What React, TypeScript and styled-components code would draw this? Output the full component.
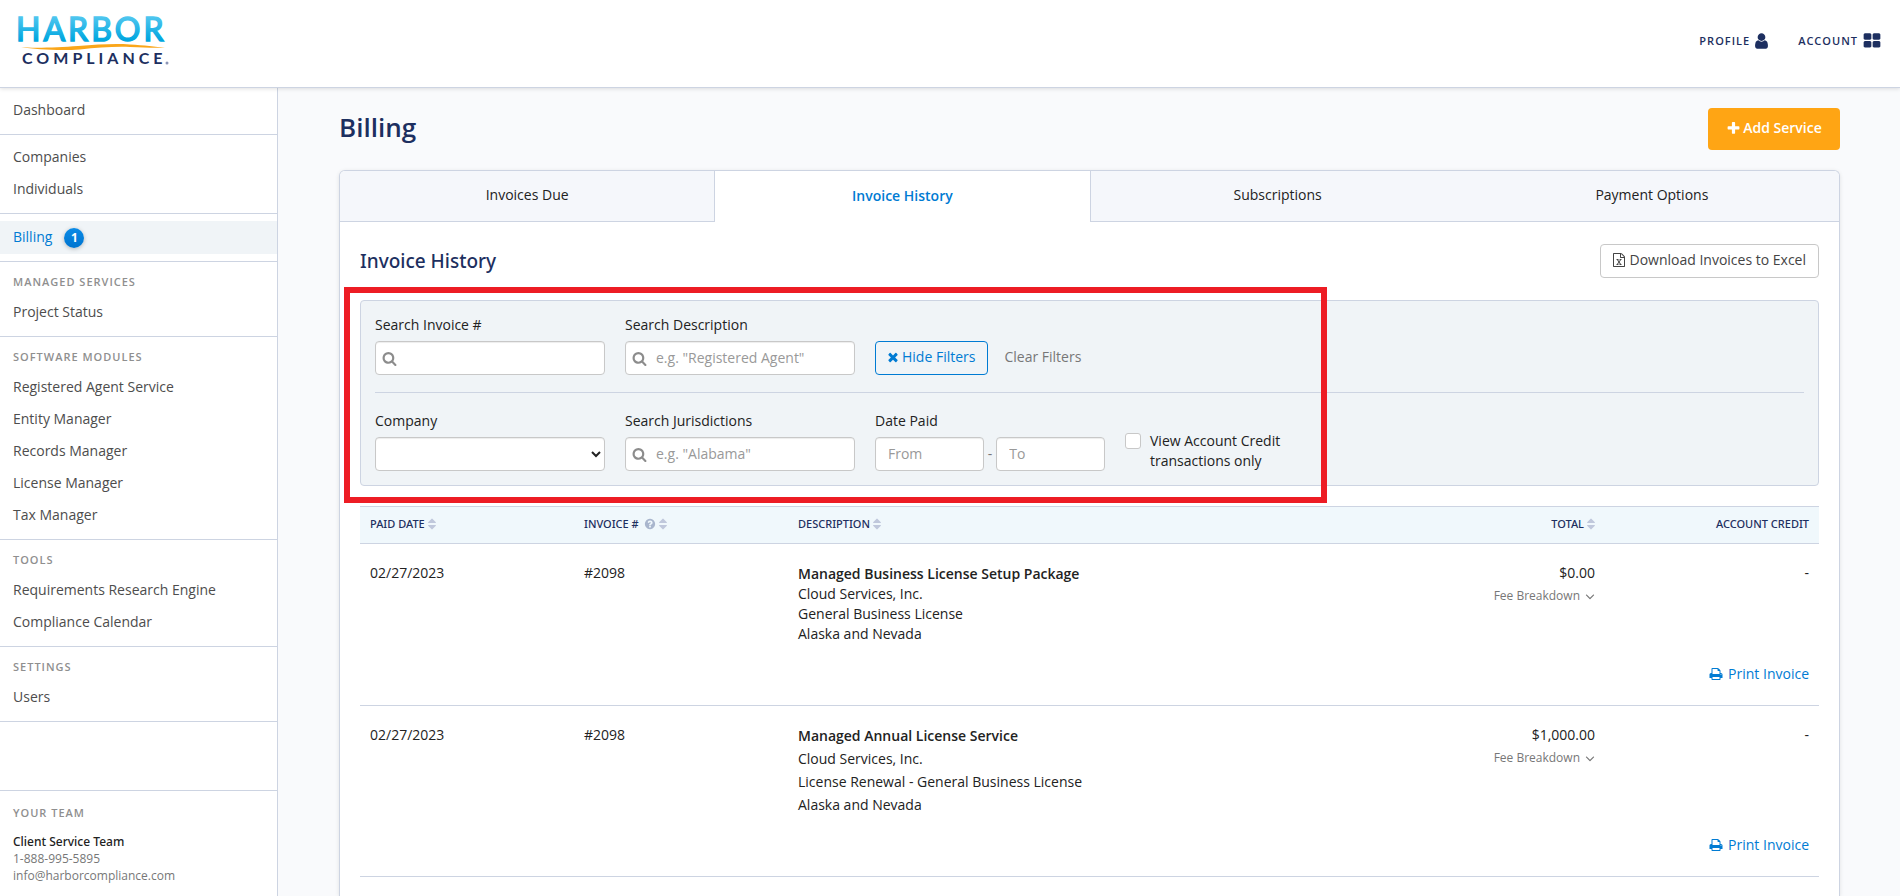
import React from "react";
import styled, { createGlobalStyle, css } from "styled-components";

const color = {
  navy: "#1d2f60",
  blue: "#007bd3",
  line: "#cdd4e2",
  text: "#222222",
  muted: "#777777",
  nav: "#4d4d4d",
  field: "#c8c8c8",
};

const mediumFont = `"Noto Sans", "Open Sans", sans-serif`;

const GlobalStyle = createGlobalStyle`
  *, *::before, *::after { box-sizing: border-box; }
  body {
    margin: 0;
    background: #f9fafc;
    color: ${color.text};
    font-family: "Open Sans", "Noto Sans", sans-serif;
    font-size: 14px;
    line-height: 20px;
  }
  a { text-decoration: none; }
  button, input, select { font: inherit; }
  button { cursor: pointer; }
`;

/* ---------- icons ---------- */

const icons = {
  search:
    "M1216 832q0-185-131.5-316.5t-316.5-131.5-316.5 131.5-131.5 316.5 131.5 316.5 316.5 131.5 316.5-131.5 131.5-316.5zm512 832q0 52-38 90t-90 38q-54 0-90-38l-343-342q-179 124-399 124-143 0-273.5-55.5t-225-150-150-225-55.5-273.5 55.5-273.5 150-225 225-150 273.5-55.5 273.5 55.5 225 150 150 225 55.5 273.5q0 220-124 399l343 343q37 37 37 90z",
  user:
    "M1536 1399q0 109-62.5 187t-150.5 78h-854q-88 0-150.5-78t-62.5-187q0-85 8.5-160.5t31.5-152 58.5-131 94-89 134.5-34.5q131 128 313 128t313-128q76 0 134.5 34.5t94 89 58.5 131 31.5 152 8.5 160.5zm-256-887q0 159-112.5 271.5t-271.5 112.5-271.5-112.5-112.5-271.5 112.5-271.5 271.5-112.5 271.5 112.5 112.5 271.5z",
  grid:
    "M832 1024v384q0 52-38 90t-90 38h-512q-52 0-90-38t-38-90v-384q0-52 38-90t90-38h512q52 0 90 38t38 90zm0-768v384q0 52-38 90t-90 38h-512q-52 0-90-38t-38-90v-384q0-52 38-90t90-38h512q52 0 90 38t38 90zm896 768v384q0 52-38 90t-90 38h-512q-52 0-90-38t-38-90v-384q0-52 38-90t90-38h512q52 0 90 38t38 90zm0-768v384q0 52-38 90t-90 38h-512q-52 0-90-38t-38-90v-384q0-52 38-90t90-38h512q52 0 90 38t38 90z",
  plus:
    "M1600 736v192q0 40-28 68t-68 28h-416v416q0 40-28 68t-68 28h-192q-40 0-68-28t-28-68v-416h-416q-40 0-68-28t-28-68v-192q0-40 28-68t68-28h416v-416q0-40 28-68t68-28h192q40 0 68 28t28 68v416h416q40 0 68 28t28 68z",
  times:
    "M1490 1322q0 40-28 68l-136 136q-28 28-68 28t-68-28l-294-294-294 294q-28 28-68 28t-68-28l-136-136q-28-28-28-68t28-68l294-294-294-294q-28-28-28-68t28-68l136-136q28-28 68-28t68 28l294 294 294-294q28-28 68-28t68 28l136 136q28 28 28 68t-28 68l-294 294 294 294q28 28 28 68z",
  print:
    "M448 1536h896v-256h-896v256zm0-640h896v-384h-160q-40 0-68-28t-28-68v-160h-640v640zm1152 64q0-26-19-45t-45-19-45 19-19 45 19 45 45 19 45-19 19-45zm128 0v416q0 13-9.5 22.5t-22.5 9.5h-224v160q0 40-28 68t-68 28h-960q-40 0-68-28t-28-68v-160h-224q-13 0-22.5-9.5t-9.5-22.5v-416q0-79 56.5-135.5t135.5-56.5h64v-544q0-40 28-68t68-28h672q40 0 88 20t76 48l152 152q28 28 48 76t20 88v256h64q79 0 135.5 56.5t56.5 135.5z",
  help:
    "M1024 1376v-192q0-14-9-23t-23-9h-192q-14 0-23 9t-9 23v192q0 14 9 23t23 9h192q14 0 23-9t9-23zm256-672q0-88-55.5-163t-138.5-116-170-41q-243 0-371 213-15 24 8 42l132 100q7 6 19 6 16 0 25-12 53-68 86-92 34-24 86-24 48 0 85.5 26t37.5 59q0 38-20 61t-68 45q-63 28-115.5 86.5t-52.5 125.5v36q0 14 9 23t23 9h192q14 0 23-9t9-23q0-19 21.5-49.5t54.5-49.5q32-18 49-28.5t46-35 44.5-48 28-60.5 12.5-81zm384 192q0 209-103 385.5t-279.5 279.5-385.5 103-385.5-103-279.5-279.5-103-385.5 103-385.5 279.5-279.5 385.5-103 385.5 103 279.5 279.5 103 385.5z",
  sort:
    "M1408 1088q0 26-19 45l-448 448q-19 19-45 19t-45-19l-448-448q-19-19-19-45t19-45 45-19h896q26 0 45 19t19 45zm0-384q0 26-19 45t-45 19h-896q-26 0-45-19t-19-45 19-45l448-448q19-19 45-19t45 19l448 448q19 19 19 45z",
  down:
    "M1395 736q0 13-10 23l-466 466q-10 10-23 10t-23-10l-466-466q-10-10-10-23t10-23l50-50q10-10 23-10t23 10l393 393 393-393q10-10 23-10t23 10l50 50q10 10 10 23z",
  excel:
    "M1596 380q28 28 48 76t20 88v1152q0 40-28 68t-68 28h-1344q-40 0-68-28t-28-68v-1600q0-40 28-68t68-28h896q40 0 88 20t76 48zm-444-244v376h376q-10-29-22-41l-313-313q-12-12-41-22zm384 1528v-1024h-416q-40 0-68-28t-28-68v-416h-768v1536h1280zm-979-234v106h281v-106h-75l103-161q5-7 10-16.5t7.5-13.5 3.5-4h2q1 4 5 10 2 4 4.5 7.5t6 8 6.5 8.5l107 161h-76v106h291v-106h-68l-192-273 195-282h67v-107h-279v107h74l-103 159q-4 7-10 16.5t-9 13.5l-2 3h-2q-1-4-5-10-6-11-17-23l-106-159h76v-107h-290v107h68l189 272-194 283h-68z",
};

const Icon = ({ name, size = 14, box = "0 0 1792 1792" }: { name: keyof typeof icons; size?: number; box?: string }) => {
  const [, , w, h] = box.split(" ").map(Number);
  return (
    <svg width={Math.round((size * w) / h)} height={size} viewBox={box} fill="currentColor" aria-hidden="true">
      <path d={icons[name]} />
    </svg>
  );
};

const Logo = () => (
  <svg width="170" height="70" viewBox="-6 -8 170 70" role="img" aria-label="Harbor Compliance">
    <defs>
      <linearGradient id="sea" x1="0" y1="0" x2="0" y2="1">
        <stop offset="0.2" stopColor="#4fc6ef" />
        <stop offset="0.8" stopColor="#00a6df" />
      </linearGradient>
    </defs>
    <text
      x="-2"
      y="27"
      fill="url(#sea)"
      stroke="url(#sea)"
      strokeWidth="1.500"
      fontFamily="Lato, sans-serif"
      fontSize="32"
      letterSpacing="3"
    >
      HARBOR
    </text>
    <path d="M3 33 C14 34.500 40 33.500 60 32 C80 30.500 96 29.500 112 30.500 C126 31.200 138 33 147 33.500 C138 34.300 126 33.500 112 33 C96 32.500 80 33.500 62 35.500 C42 37 18 35.500 3 33Z" fill="#faa61a" />
    <text x="4" y="50" fill={color.navy} fontFamily="Lato, sans-serif" fontSize="16" fontWeight="700" letterSpacing="4">
      COMPLIANCE
    </text>
    <circle cx="149" cy="49" r="1.500" fill="#8b94b5" />
  </svg>
);

/* ---------- page frame ---------- */

const Page = styled.div`
  min-height: 100vh;
  display: flex;
  flex-direction: column;
`;

const Header = styled.header`
  position: relative;
  display: flex;
  justify-content: space-between;
  height: 88px;
  padding: 6px 19px 0 12px;
  background: #fff;
  border-bottom: 1px solid ${color.line};
  box-shadow: 0 1px 4px rgba(0, 0, 0, 0.12);
`;

const AccountNav = styled.nav`
  display: flex;
  gap: 30px;
  height: 70px;
  align-items: center;
`;

const AccountLink = styled.a`
  display: flex;
  align-items: center;
  gap: 5px;
  color: ${color.navy};
  font-size: 11px;
  font-weight: 600;
  letter-spacing: 1px;
`;

const Body = styled.div`
  flex: 1;
  display: flex;
`;

const Sidebar = styled.aside`
  flex: 0 0 278px;
  display: flex;
  flex-direction: column;
  background: #fff;
  border-right: 1px solid ${color.line};
`;

const NavGroup = styled.nav`
  padding: 7px 0;
  border-bottom: 1px solid ${color.line};
`;

const GroupTitle = styled.h2`
  margin: 0;
  padding: 0 13px 2px;
  color: #8f8f8f;
  font-size: 11px;
  font-weight: 600;
  line-height: 26px;
  letter-spacing: 1px;
`;

const NavLink = styled.a<{ $active?: boolean }>`
  display: flex;
  align-items: center;
  gap: 12px;
  min-height: ${(p) => (p.$active ? 33 : 32)}px;
  padding: 0 13px 2px;
  color: ${(p) => (p.$active ? color.blue : color.nav)};
  background: ${(p) => (p.$active ? "#f0f4f7" : "transparent")};
`;

const Count = styled.span`
  width: 20px;
  height: 20px;
  margin-top: 2px;
  border-radius: 50%;
  background: linear-gradient(#0a8ae6, #0074cf);
  box-shadow: 0 1px 4px rgba(0, 0, 0, 0.25);
  color: #fff;
  font-size: 12px;
  font-weight: 700;
  line-height: 20px;
  text-align: center;
`;

const Team = styled.section`
  margin-top: auto;
  padding: 9px 0 12px;
  border-top: 1px solid ${color.line};
`;

const TeamList = styled.address`
  display: flex;
  flex-direction: column;
  padding: 5px 13px 0;
  color: ${color.muted};
  font-size: 12px;
  font-style: normal;
  line-height: 17px;

  strong { color: ${color.text}; font-family: ${mediumFont}; font-weight: 500; }
  a { color: inherit; }
`;

const Main = styled.main`
  flex: 1;
  min-width: 0;
  display: flex;
  flex-direction: column;
  padding: 20px 60px 0 61px;
`;

const TitleBar = styled.div`
  display: flex;
  justify-content: space-between;
  align-items: flex-start;
  margin-bottom: 20px;
`;

const PageTitle = styled.h1`
  margin: 0;
  color: ${color.navy};
  font-size: 26px;
  font-weight: 600;
  line-height: 38px;
`;

const AddButton = styled.button`
  display: flex;
  align-items: center;
  justify-content: center;
  gap: 2px;
  width: 132px;
  height: 42px;
  padding: 0 0 2px;
  border: 0;
  border-radius: 4px;
  background: #ffa514;
  color: #fff;
  font-weight: 600;
`;

/* ---------- panel ---------- */

const Panel = styled.div`
  flex: 1;
  background: #fff;
  border: 1px solid ${color.line};
  border-bottom: 0;
  border-radius: 6px 6px 0 0;
  box-shadow: 0 1px 4px rgba(0, 0, 0, 0.1);
`;

const Tabs = styled.div`
  display: flex;
`;

const Tab = styled.button<{ $active?: boolean }>`
  flex: 1;
  height: 51px;
  padding: 0 0 2px;
  border: 0;
  border-bottom: 1px solid ${color.line};
  background: #f5f7fb;
  color: ${color.text};

  &:first-child { border-top-left-radius: 5px; }
  &:last-child { border-top-right-radius: 5px; }

  ${(p) =>
    p.$active &&
    css`
      border: 1px solid ${color.line};
      border-width: 0 1px;
      background: #fff;
      color: ${color.blue};
      font-weight: 600;
    `}
`;

const PanelBody = styled.div`
  padding: 22px 20px 0;
`;

const SectionBar = styled.div`
  display: flex;
  justify-content: space-between;
  align-items: center;
  margin-bottom: 22px;
`;

const SectionTitle = styled.h2`
  margin: 0;
  color: ${color.navy};
  font-family: ${mediumFont};
  font-size: 19px;
  font-weight: 500;
  line-height: 34px;
`;

const Button = styled.button<{ $primary?: boolean }>`
  display: flex;
  align-items: center;
  gap: 4px;
  height: 34px;
  padding: 0 12px 2px;
  border: 1px solid ${(p) => (p.$primary ? color.blue : color.field)};
  border-radius: 4px;
  background: ${(p) => (p.$primary ? "transparent" : "#fff")};
  color: ${(p) => (p.$primary ? color.blue : "#444")};
`;

/* ---------- filters ---------- */

const Filters = styled.form`
  position: relative;
  padding: 14px;
  margin-bottom: 20px;
  background: #f0f4f7;
  border: 1px solid ${color.line};
  border-radius: 4px;
`;

const Highlight = styled.div`
  position: absolute;
  top: -14px;
  bottom: -18px;
  left: -17px;
  width: 983px;
  border: 6px solid #ed1c24;
  pointer-events: none;
`;

const FilterRow = styled.div`
  display: flex;
  gap: 20px;

  & + & {
    margin-top: 17px;
    padding-top: 18px;
    border-top: 1px solid ${color.line};
  }
`;

const Field = styled.div`
  width: 230px;
`;

const Label = styled.label`
  display: block;
  margin-bottom: 6px;
`;

const control = css`
  width: 100%;
  height: 34px;
  border: 1px solid ${color.field};
  border-radius: 4px;
  background-color: #fff;
  box-shadow: inset 0 1px 1px rgba(0, 0, 0, 0.075);
  color: ${color.text};

  &::placeholder { color: #999; }
`;

const Input = styled.input<{ $icon?: boolean }>`
  ${control}
  padding: 0 12px 2px ${(p) => (p.$icon ? 30 : 12)}px;
`;

const Select = styled.select`
  ${control}
`;

const SearchBox = styled.div`
  position: relative;

  svg {
    position: absolute;
    left: 7px;
    top: 10px;
    color: #8c8c8c;
  }
`;

const Actions = styled.div`
  display: flex;
  align-items: flex-end;
  gap: 16px;
`;

const ClearButton = styled.button`
  height: 34px;
  padding: 0 0 2px;
  border: 0;
  background: none;
  color: ${color.muted};
`;

const DateRange = styled.div`
  display: flex;
  align-items: center;
  gap: 4px;
  color: ${color.muted};
`;

const CheckLabel = styled.label`
  display: flex;
  align-items: flex-start;
  gap: 9px;
  width: 180px;
  margin-top: 20px;
`;

const Checkbox = styled.input`
  appearance: none;
  flex: none;
  width: 16px;
  height: 16px;
  margin: 2px 0 0;
  border: 1px solid ${color.field};
  border-radius: 3px;
  background: #fff;

  &:checked { background: ${color.blue}; }
`;

/* ---------- invoice table ---------- */

const Table = styled.table`
  width: 100%;
  table-layout: fixed;
  border-collapse: separate;
  border-spacing: 0;
`;

const Th = styled.th<{ $right?: boolean; $wide?: boolean }>`
  width: ${(p) => (p.$wide ? "auto" : "214px")};
  height: 38px;
  padding: 0 10px 2px;
  border: 1px solid ${color.line};
  border-width: 1px 0;
  background: #f0f8fc;
  color: ${color.navy};
  font-family: ${mediumFont};
  font-size: 11px;
  font-weight: 500;
  text-align: ${(p) => (p.$right ? "right" : "left")};

  span { display: inline-flex; align-items: center; gap: 3px; }
  svg { color: #c0c8dc; }
`;

const HelpMark = styled.i`
  display: inline-flex;
  margin-left: 2px;

  svg { color: #a9b6cd; }
`;

const Td = styled.td<{ $right?: boolean }>`
  padding: 19px 10px 0;
  vertical-align: top;
  text-align: ${(p) => (p.$right ? "right" : "left")};
`;

const PrintCell = styled.td`
  padding: 20px 10px 21px;
  border-bottom: 1px solid ${color.line};
`;

const PrintLink = styled.a`
  display: flex;
  justify-content: flex-end;
  align-items: center;
  gap: 5px;
  color: ${color.blue};
`;

const Lines = styled.div<{ $gap: number }>`
  display: flex;
  flex-direction: column;
  gap: ${(p) => p.$gap}px;
  padding-top: 1px;

  strong { font-weight: 600; }
`;

const FeeButton = styled.button`
  display: inline-flex;
  align-items: center;
  gap: 5px;
  padding: 0;
  margin-top: 3px;
  border: 0;
  background: none;
  color: ${color.muted};
  font-size: 12px;
  line-height: 20px;
`;

/* ---------- data ---------- */

const navGroups: { title?: string; items: { label: string; count?: number }[] }[] = [
  { items: [{ label: "Dashboard" }] },
  { items: [{ label: "Companies" }, { label: "Individuals" }] },
  { items: [{ label: "Billing", count: 1 }] },
  { title: "MANAGED SERVICES", items: [{ label: "Project Status" }] },
  {
    title: "SOFTWARE MODULES",
    items: [
      { label: "Registered Agent Service" },
      { label: "Entity Manager" },
      { label: "Records Manager" },
      { label: "License Manager" },
      { label: "Tax Manager" },
    ],
  },
  { title: "TOOLS", items: [{ label: "Requirements Research Engine" }, { label: "Compliance Calendar" }] },
  { title: "SETTINGS", items: [{ label: "Users" }] },
];

const tabs = ["Invoices Due", "Invoice History", "Subscriptions", "Payment Options"];

const invoices = [
  {
    date: "02/27/2023",
    number: "#2098",
    title: "Managed Business License Setup Package",
    lines: ["Cloud Services, Inc.", "General Business License", "Alaska and Nevada"],
    total: "$0.00",
    gap: 0,
  },
  {
    date: "02/27/2023",
    number: "#2098",
    title: "Managed Annual License Service",
    lines: ["Cloud Services, Inc.", "License Renewal - General Business License", "Alaska and Nevada"],
    total: "$1,000.00",
    gap: 3,
  },
];

const SearchField = ({ id, label, placeholder }: { id: string; label: string; placeholder?: string }) => (
  <Field>
    <Label htmlFor={id}>{label}</Label>
    <SearchBox>
      <Input id={id} type="text" placeholder={placeholder} $icon />
      <Icon name="search" size={15} />
    </SearchBox>
  </Field>
);

const SortIcon = () => <Icon name="sort" size={14} box="384 0 1024 1792" />;

export default function App() {
  return (
    <>
      <GlobalStyle />
      <Page>
        <Header>
          <a href="#home">
            <Logo />
          </a>
          <AccountNav>
            <AccountLink href="#profile">
              PROFILE <Icon name="user" size={18} box="256 0 1280 1792" />
            </AccountLink>
            <AccountLink href="#account">
              ACCOUNT <Icon name="grid" size={18} />
            </AccountLink>
          </AccountNav>
        </Header>
        <Body>
          <Sidebar>
            {navGroups.map((group, i) => (
              <NavGroup key={i}>
                {group.title && <GroupTitle>{group.title}</GroupTitle>}
                {group.items.map((item) => (
                  <NavLink key={item.label} href="#nav" $active={!!item.count}>
                    {item.label}
                    {item.count && <Count>{item.count}</Count>}
                  </NavLink>
                ))}
              </NavGroup>
            ))}
            <Team>
              <GroupTitle>YOUR TEAM</GroupTitle>
              <TeamList>
                <strong>Client Service Team</strong>
                <span>1-888-995-5895</span>
                <a href="mailto:info@harborcompliance.com">info@harborcompliance.com</a>
              </TeamList>
            </Team>
          </Sidebar>
          <Main>
            <TitleBar>
              <PageTitle>Billing</PageTitle>
              <AddButton type="button">
                <Icon name="plus" size={15} />
                Add Service
              </AddButton>
            </TitleBar>
            <Panel>
              <Tabs role="tablist">
                {tabs.map((t, i) => (
                  <Tab key={t} type="button" role="tab" aria-selected={i === 1} $active={i === 1}>
                    {t}
                  </Tab>
                ))}
              </Tabs>
              <PanelBody>
                <SectionBar>
                  <SectionTitle>Invoice History</SectionTitle>
                  <Button type="button">
                    <Icon name="excel" size={14} box="128 0 1536 1792" />
                    Download Invoices to Excel
                  </Button>
                </SectionBar>
                <Filters>
                  <FilterRow>
                    <SearchField id="invoice" label="Search Invoice #" />
                    <SearchField id="description" label="Search Description" placeholder={'e.g. "Registered Agent"'} />
                    <Actions>
                      <Button type="button" $primary>
                        <Icon name="times" size={14} box="256 0 1280 1792" />
                        Hide Filters
                      </Button>
                      <ClearButton type="reset">Clear Filters</ClearButton>
                    </Actions>
                  </FilterRow>
                  <FilterRow>
                    <Field>
                      <Label htmlFor="company">Company</Label>
                      <Select id="company" defaultValue="">
                        <option value=""></option>
                      </Select>
                    </Field>
                    <SearchField id="jurisdiction" label="Search Jurisdictions" placeholder={'e.g. "Alabama"'} />
                    <Field>
                      <Label htmlFor="from">Date Paid</Label>
                      <DateRange>
                        <Input id="from" type="text" placeholder="From" />-
                        <Input type="text" placeholder="To" aria-label="Date paid to" />
                      </DateRange>
                    </Field>
                    <CheckLabel>
                      <Checkbox type="checkbox" />
                      View Account Credit transactions only
                    </CheckLabel>
                  </FilterRow>
                  <Highlight />
                </Filters>
                <Table>
                  <thead>
                    <tr>
                      <Th><span>PAID DATE <SortIcon /></span></Th>
                      <Th><span>INVOICE # <HelpMark><Icon name="help" size={12} /></HelpMark><SortIcon /></span></Th>
                      <Th $wide><span>DESCRIPTION <SortIcon /></span></Th>
                      <Th $right><span>TOTAL <SortIcon /></span></Th>
                      <Th $right>ACCOUNT CREDIT</Th>
                    </tr>
                  </thead>
                  {invoices.map((inv) => (
                    <tbody key={inv.title}>
                      <tr>
                        <Td>{inv.date}</Td>
                        <Td>{inv.number}</Td>
                        <Td>
                          <Lines $gap={inv.gap}>
                            <strong>{inv.title}</strong>
                            {inv.lines.map((l) => (
                              <span key={l}>{l}</span>
                            ))}
                          </Lines>
                        </Td>
                        <Td $right>
                          <div>{inv.total}</div>
                          <FeeButton type="button">
                            Fee Breakdown <Icon name="down" size={15} box="320 0 1152 1792" />
                          </FeeButton>
                        </Td>
                        <Td $right>-</Td>
                      </tr>
                      <tr>
                        <PrintCell colSpan={5}>
                          <PrintLink href="#print">
                            <Icon name="print" size={14} />
                            Print Invoice
                          </PrintLink>
                        </PrintCell>
                      </tr>
                    </tbody>
                  ))}
                </Table>
              </PanelBody>
            </Panel>
          </Main>
        </Body>
      </Page>
    </>
  );
}
